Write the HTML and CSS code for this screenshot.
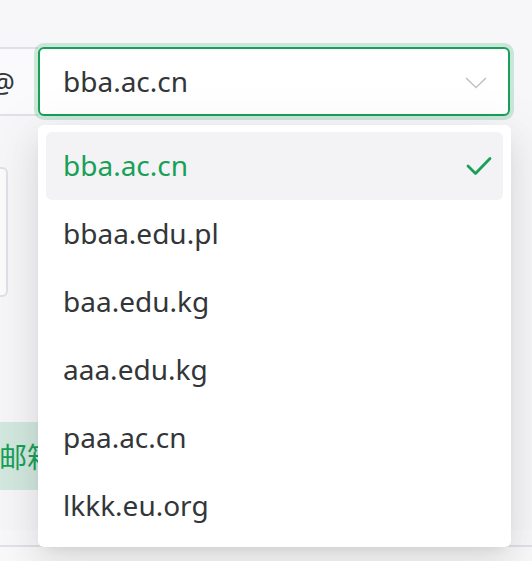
FILE: index.html
```html
<!DOCTYPE html>
<html lang="zh-CN">
<head>
    <meta charset="UTF-8">
    <meta name="viewport" content="width=device-width, initial-scale=1.0">
    <title>Email domain select</title>
    <link rel="stylesheet" href="styles.css">
</head>
<body>
    <div class="page">
        <div class="form">
            <div class="input-group">
                <div class="addon">@</div>
                <div class="select">
                    <span class="select-value">bba.ac.cn</span>
                    <svg class="arrow" width="22" height="12" viewBox="0 0 22 12">
                        <path d="M1 1 L11 10.5 L21 1" fill="none" stroke="#c2c2c2" stroke-width="1.6"/>
                    </svg>

                    <div class="menu">
                        <div class="option selected">
                            <span>bba.ac.cn</span>
                            <svg class="check" width="26" height="20" viewBox="0 0 26 20">
                                <path d="M2 10 L9.5 17.5 L24 2.5" fill="none" stroke="#18a058" stroke-width="2.8" stroke-linecap="round" stroke-linejoin="round"/>
                            </svg>
                        </div>
                        <div class="option"><span>bbaa.edu.pl</span></div>
                        <div class="option"><span>baa.edu.kg</span></div>
                        <div class="option"><span>aaa.edu.kg</span></div>
                        <div class="option"><span>paa.ac.cn</span></div>
                        <div class="option"><span>lkkk.eu.org</span></div>
                    </div>
                </div>
            </div>

            <div class="textarea"></div>

            <button class="btn-secondary">生成邮箱</button>
        </div>

        <div class="band"></div>
        <div class="footer"></div>
    </div>
</body>
</html>
```

FILE: styles.css
```css
* {
    margin: 0;
    padding: 0;
    box-sizing: border-box;
}

body {
    font-family: 'Noto Sans', 'Noto Sans CJK SC', sans-serif;
    background: #f7f7f9;
    color: #333639;
    width: 532px;
    height: 561px;
    overflow: hidden;
}

.page {
    padding-top: 47px;
    display: flex;
    flex-direction: column;
}

.form {
    display: flex;
    flex-direction: column;
    align-items: flex-start;
    margin-left: -80px;
    height: 483px;
}

.input-group {
    display: flex;
    height: 69px;
}

.addon {
    width: 118px;
    height: 69px;
    border-top: 2px solid #e0e0e6;
    border-bottom: 2px solid #e0e0e6;
    background: #fafafc;
    display: flex;
    align-items: center;
    justify-content: flex-end;
    padding-right: 23px;
    font-size: 28px;
}

.select {
    position: relative;
    width: 472px;
    height: 69px;
    background: #fff;
    border: 2px solid #18a058;
    border-radius: 6px;
    box-shadow: 0 0 0 4px rgba(24, 160, 88, 0.2);
    display: flex;
    align-items: center;
    justify-content: space-between;
    padding: 0 21px 0 23px;
    font-size: 28px;
}

.select-value {
    line-height: 1;
    padding-bottom: 2px;
}

.arrow {
    margin-top: 2px;
}

/* dropdown sits over the rest of the form */
.menu {
    position: absolute;
    top: 76px;
    left: -2px;
    width: 473px;
    padding: 7px 8px;
    background: #fff;
    border-radius: 6px;
    box-shadow: 0 6px 12px -8px rgba(0,0,0,0.12),
                0 12px 32px 0 rgba(0,0,0,0.08),
                0 18px 56px 16px rgba(0,0,0,0.05);
    z-index: 10;
}

.option {
    height: 68px;
    display: flex;
    align-items: center;
    justify-content: space-between;
    padding: 0 11px 0 17px;
    border-radius: 6px;
    font-size: 28px;
    color: #333639;
}

.option span {
    padding-bottom: 2px;
}

.option.selected {
    background: #f3f3f5;
    color: #18a058;
}

.textarea {
    margin-top: 51px;
    width: 88px;
    height: 130px;
    border: 2px solid #e0e0e6;
    border-radius: 6px;
    background: #fcfcfd;
}

.btn-secondary {
    margin-top: 125px;
    margin-left: 23px;
    width: 200px;
    height: 68px;
    padding: 0;
    border: none;
    border-radius: 6px;
    background: rgba(24, 160, 88, 0.16);
    color: #18a058;
    font-family: 'Noto Sans CJK SC', sans-serif;
    font-size: 28px;
    text-align: left;
}

.band {
    height: 15px;
    background: #f9f9fb;
}

.footer {
    height: 20px;
    border-top: 2px solid #e2e2e8;
    background: #fafafa;
}
```
